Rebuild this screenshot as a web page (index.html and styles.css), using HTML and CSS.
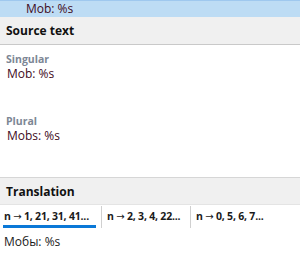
FILE: index.html
```html
<!DOCTYPE html>
<html lang="en">
<head>
<meta charset="UTF-8" />
<meta name="viewport" content="width=device-width, initial-scale=1" />
<title>Translation editor</title>
<link rel="stylesheet" href="styles.css">
</head>
<body>
  <div class="item-row">
    <span class="item-text">Mob: %s</span>
  </div>

  <div class="section-header">Source text</div>
  <div class="source-body">
    <div class="form">
      <div class="form-label">Singular</div>
      <div class="form-text">Mob: %s</div>
    </div>
    <div class="form">
      <div class="form-label">Plural</div>
      <div class="form-text">Mobs: %s</div>
    </div>
  </div>

  <div class="section-header translation">Translation</div>
  <div class="tabs">
    <div class="tab tab-first active">n <span class="arrow">→</span> 1, 21, 31, 41...</div>
    <div class="tab tab-second">n <span class="arrow">→</span> 2, 3, 4, 22...</div>
    <div class="tab">n <span class="arrow">→</span> 0, 5, 6, 7...</div>
  </div>
  <div class="translation-text">Мобы: %s</div>
</body>
</html>
```
FILE: styles.css
```css
* {
  box-sizing: border-box;
}
body {
  margin: 0;
  background: #ffffff;
  color: #1a1a1a;
  font-family: 'Open Sans', 'Noto Sans', sans-serif;
  font-size: 12px;
  width: 300px;
  height: 263px;
  overflow: hidden;
}
.item-row {
  height: 17px;
  background: #bddcf4;
  border-top: 1px solid #9fc8ee;
  padding-left: 26px;
  display: flex;
  align-items: center;
  color: #3e0a22;
  line-height: 16px;
}
.section-header {
  height: 28px;
  background: #f0f0f0;
  border-bottom: 1px solid #c9c9c9;
  padding-left: 6px;
  display: flex;
  align-items: center;
  font-weight: 700;
  color: #111111;
}
.section-header.translation {
  height: 28px;
  border-top: 1px solid #d6d6d6;
  border-bottom: 1px solid #e4e4e4;
}
.source-body {
  height: 132px;
  padding: 8px 0 0 6px;
  display: flex;
  flex-direction: column;
  gap: 34px;
}
.form-label {
  font-size: 10.5px;
  font-weight: 700;
  color: #7c8694;
  line-height: 13px;
}
.form-text {
  color: #3e0a22;
  padding-left: 1px;
  line-height: 15px;
}
.tabs {
  display: flex;
  align-items: flex-start;
  height: 24px;
  padding-top: 1px;
}
.tab {
  font-weight: 700;
  font-size: 10.5px;
  letter-spacing: -0.2px;
  height: 22px;
  line-height: 20px;
  padding-left: 5px;
  white-space: nowrap;
}
.tab-first {
  width: 99px;
  padding-left: 0;
  margin-left: 3px;
  margin-right: 5px;
}
.tab-first.active {
  width: 93px;
  border-bottom: 3px solid #0a78d7;
  padding-left: 1px;
}
.tab-second {
  width: 90px;
  border-left: 1px solid #d0d0d0;
  border-right: 1px solid #d0d0d0;
}
.arrow {
  font-family: 'DejaVu Sans', sans-serif;
  font-weight: 400;
  font-size: 10px;
}
.translation-text {
  padding: 4px 0 0 4px;
  color: #1a1a1a;
}
```
